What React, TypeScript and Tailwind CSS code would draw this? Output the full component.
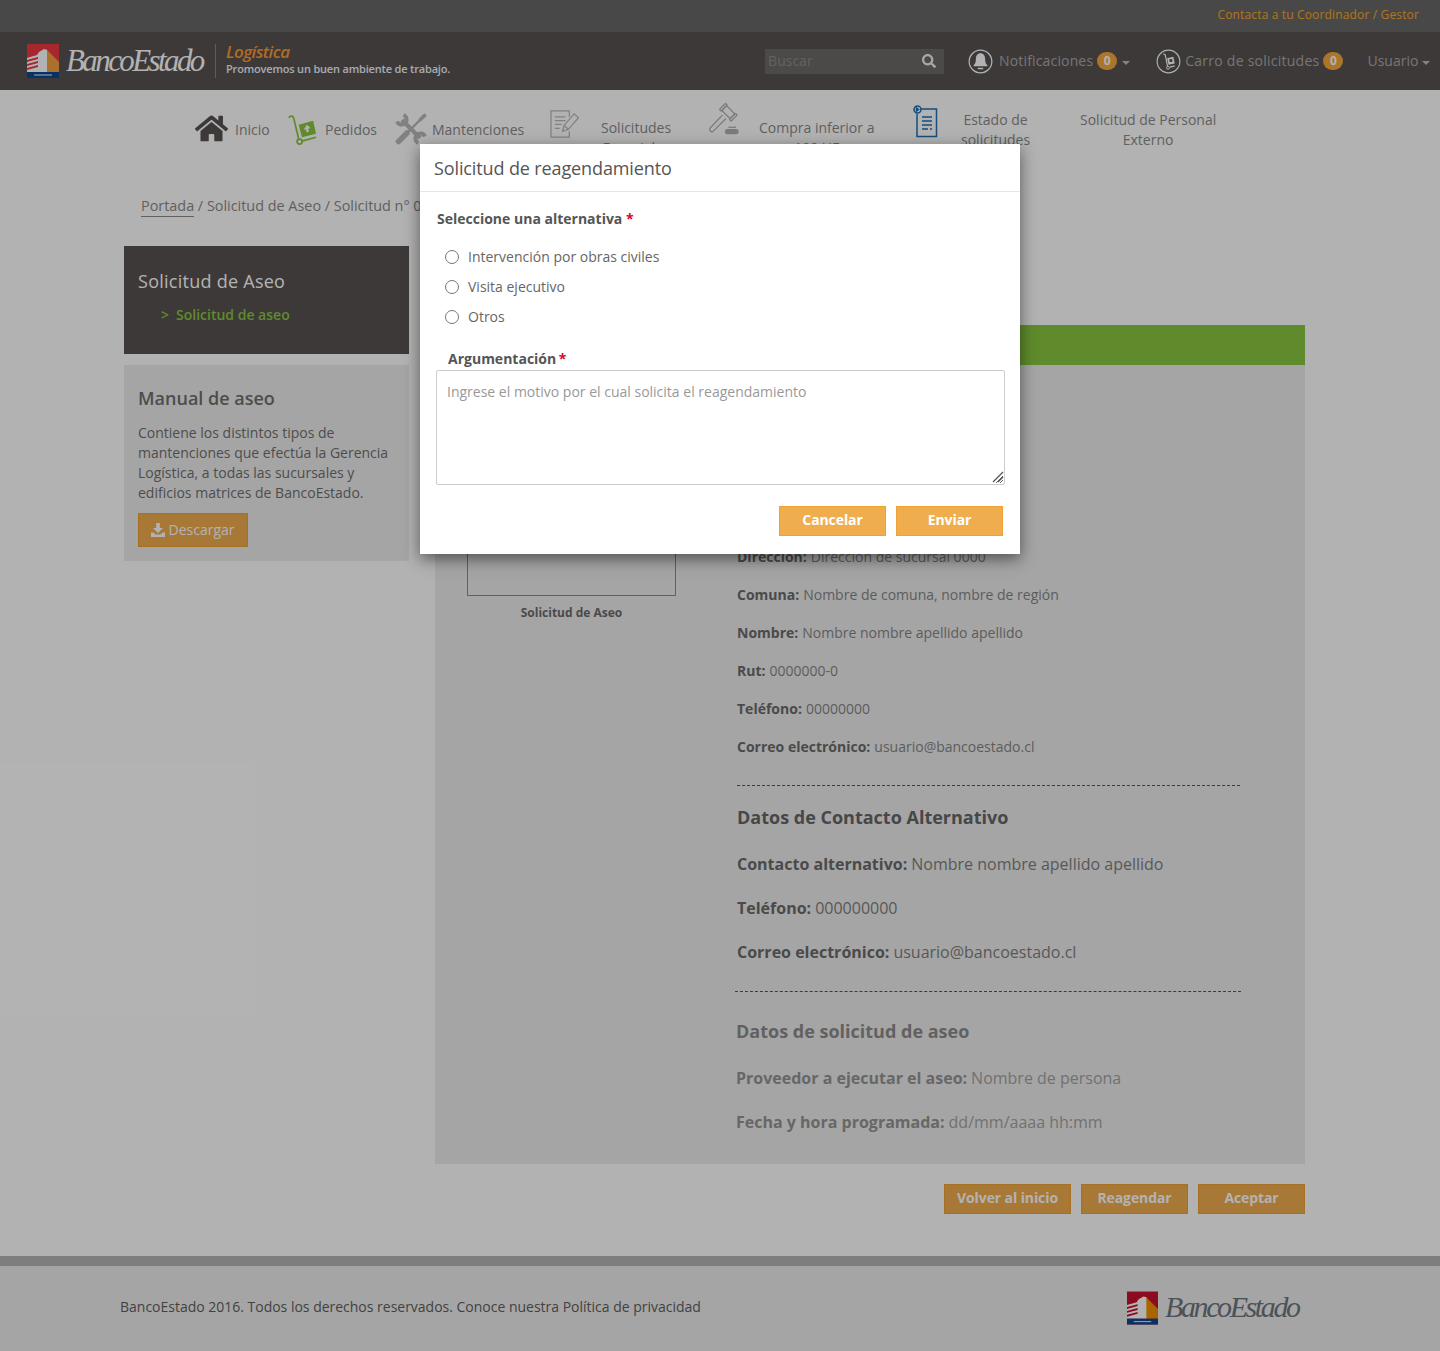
import React from "react";
import { FaHome, FaSearch } from "react-icons/fa";

function LogoMark({ className, red = "#c8102e", orange = "#f39200" }: { className?: string; red?: string; orange?: string }) {
  return (
    <svg viewBox="0 0 32 34" className={className}>
      <rect width="32" height="34" fill={red} />
      <path d="M19 5 L32 18 V28 H19 Z" fill={orange} />
      <path d="M0 14 L10 11 L12 8 L17 5 L20 6 V28 H0 Z" fill="#ffffff" />
      <path d="M0 16 L11 13 V15 L0 18 Z M0 20 L11 17 V19 L0 22 Z M0 24 L11 21 V23 L0 26 Z" fill={red} />
      <rect y="28" width="32" height="6" fill="#0a4a94" />
      <rect x="7" y="30.4" width="18" height="1.2" fill="#ffffff" opacity="0.8" />
    </svg>
  );
}

function BellCircle() {
  return (
    <svg viewBox="0 0 26 26" className="h-[25px] w-[25px]" fill="none">
      <circle cx="13" cy="13" r="11.8" stroke="#ffffff" strokeWidth="1.3" />
      <path d="M13 4.500c-3 0-4.800 2.400-4.800 5.800 0 3.700-1 5.200-2.400 6.500v1.200h14.400v-1.200c-1.400-1.300-2.400-2.800-2.400-6.500 0-3.400-1.800-5.800-4.800-5.800Z" fill="#ffffff" />
      <rect x="10" y="19.400" width="6" height="1.600" rx="0.800" fill="#ffffff" />
    </svg>
  );
}

function CartCircle() {
  return (
    <svg viewBox="0 0 26 26" className="h-[25px] w-[25px]" fill="none">
      <circle cx="13" cy="13" r="11.800" stroke="#ffffff" strokeWidth="1.200" />
      <path d="M7.500 5.500c1-.8 2 .1 2.200 1L12 18" stroke="#ffffff" strokeWidth="1.200" />
      <circle cx="12.500" cy="19.500" r="1.500" stroke="#ffffff" strokeWidth="1" />
      <path d="M14.500 18.800l5-1.300" stroke="#ffffff" strokeWidth="1.200" />
      <path d="M11.500 9.500l6.500-1.500 1.500 7-6.500 1.500Z" fill="#ffffff" />
      <rect x="14" y="10.500" width="3" height="3" fill="#575251" />
    </svg>
  );
}

function TruckIcon() {
  return (
    <svg viewBox="0 0 30 32" className="h-[32px] w-[29px]">
      <path d="M1 3.500C2 1 5 1 5.800 3.500L11 25" fill="none" stroke="#88c740" strokeWidth="1.800" />
      <circle cx="12" cy="28" r="2.600" fill="none" stroke="#88c740" strokeWidth="1.800" />
      <path d="M14.500 27.500L29 23.500" stroke="#88c740" strokeWidth="1.800" />
      <path d="M11 10.500L26 6.500 29 20 14.500 23.500Z" fill="#88c740" />
      <path d="M19.500 10.500l3.800 3.500-2.300.6.800 3.200-2.600.6-.8-3.200-2.300.6Z" fill="#ffffff" />
    </svg>
  );
}

function ToolsIcon() {
  return (
    <svg viewBox="0 0 32 32" className="h-[32px] w-[32px]" fill="none" stroke="#b9b9b9" strokeLinecap="round">
      {/* wrench: shaft and two open jaws */}
      <path d="M7 7L25 25" strokeWidth="4.500" strokeLinecap="butt" />
      <path d="M8.500 2A5 5 0 1 1 2 8.500" strokeWidth="3.800" strokeLinecap="butt" />
      <path d="M23.500 30A5 5 0 1 1 30 23.500" strokeWidth="3.800" strokeLinecap="butt" />
      {/* screwdriver */}
      <path d="M3.500 28.500L12 20" strokeWidth="5.500" />
      <path d="M12 20L25 7" strokeWidth="2.400" />
      <path d="M25.500 6.500L29.500 2.500" strokeWidth="3.800" />
    </svg>
  );
}

function FormIcon() {
  return (
    <svg viewBox="0 0 31 29" className="h-[28px] w-[30px]" fill="none" stroke="#b9b9b9" strokeWidth="1.300">
      <path d="M20 7V1H1v27h19v-6" />
      <path d="M5 7h11M5 11h11M5 15h7M5 19h5" />
      <path d="M13 22l1.500-6L25 4l4.500 4L19 20Z" />
      <path d="M14.500 16l4.500 4" />
    </svg>
  );
}

function GavelIcon() {
  return (
    <svg viewBox="0 0 32 32" className="h-[32px] w-[31px]" fill="none" stroke="#b0b0b0" strokeWidth="1.300">
      <g transform="translate(21 9) rotate(45)">
        <rect x="-6" y="-3.500" width="12" height="7" />
        <rect x="-8.500" y="-4.500" width="2.500" height="9" rx="1" />
        <rect x="6" y="-4.500" width="2.500" height="9" rx="1" />
      </g>
      <path d="M15 12L2 25.500C1 27.500 3 30 5 29L18.500 15.500" />
      <rect x="18" y="27" width="13" height="4" rx="2" fill="#b0b0b0" />
      <path d="M21 24.500h8" />
    </svg>
  );
}

function StatusIcon() {
  return (
    <svg viewBox="0 0 25 33" className="h-[33px] w-[25px]" fill="none" stroke="#1f6fb2" strokeWidth="1.500">
      <path d="M8 4h15.500v27.500H4V9" />
      <circle cx="4.500" cy="4.500" r="3.500" />
      <path d="M3.500 3v3l2-1.500Z" fill="#1f6fb2" />
      <path d="M9 12h10M9 16h10M9 20h10M9 24h6M17 24h2" />
    </svg>
  );
}

function DownloadIcon() {
  return (
    <svg viewBox="0 0 14 14" className="h-[14px] w-[14px]" fill="#ffffff">
      <path d="M5.200 0h3.600v5H12L7 10 2 5h3.200Z" />
      <path d="M0 9.500h2.500L4.500 11.500h5L11.500 9.500H14V14H0Z" />
    </svg>
  );
}

function Badge() {
  return (
    <span className="flex h-[18px] w-5 items-center justify-center rounded-full bg-[#f5a83f] text-xs font-bold text-white">
      0
    </span>
  );
}

function Caret() {
  return <span className="mt-[3px] h-0 w-0 border-x-[4px] border-t-[4px] border-x-transparent border-t-[#ffffff]/60" />;
}

function Row({ label, value }: { label: string; value: string }) {
  return (
    <div className="flex h-[38px] items-center text-sm text-[#858585]">
      <span className="mr-1 font-bold text-[#6b6b6b]">{label}</span>
      {value}
    </div>
  );
}

function BigRow({ label, value, muted }: { label: string; value: string; muted?: boolean }) {
  return (
    <div className={`flex h-[44px] items-center text-base ${muted ? "text-[#a3a3a3]" : "text-[#7f7f7f]"}`}>
      <span className={`mr-1 font-bold ${muted ? "text-[#949494]" : "text-[#6b6b6b]"}`}>{label}</span>
      {value}
    </div>
  );
}

function OrangeButton({ children, className }: { children: React.ReactNode; className?: string }) {
  return (
    <button className={`h-[30px] border border-[#eea236] bg-[#f0ad4e] pb-[2px] text-sm font-bold tracking-[-0.1px] text-white ${className}`}>
      {children}
    </button>
  );
}

function Modal() {
  return (
    <div className="absolute top-[144px] left-[420px] h-[410px] w-[600px] bg-white text-[#666] shadow-[0_5px_15px_rgba(0,0,0,0.5)]">
      <div className="flex h-[48px] items-center border-b border-[#e5e5e5] pl-[14px] text-lg tracking-[-0.12px] text-[#555]">
        Solicitud de reagendamiento
      </div>
      <div className="pt-[17px] pl-[17px] text-sm font-bold text-[#555]">
        Seleccione una alternativa <span className="text-[#e0002a]">*</span>
      </div>
      <div className="mt-[13px] pl-[25px]">
        {["Intervención por obras civiles", "Visita ejecutivo", "Otros"].map((item) => (
          <label key={item} className="flex h-[30px] items-center gap-[9px] text-sm">
            <span className="h-[14px] w-[14px] rounded-full border border-[#767676] bg-white" />
            {item}
          </label>
        ))}
      </div>
      <div className="mt-[17px] pl-[28px] text-sm font-bold text-[#555]">
        Argumentación <span className="-ml-[1px] text-[#e0002a]">*</span>
      </div>
      <div className="relative mt-[1px] pl-[16px]">
        <textarea
          placeholder="Ingrese el motivo por el cual solicita el reagendamiento"
          className="block h-[115px] w-[569px] rounded-[2px] border border-[#ccc] px-[10px] py-[11px] text-sm leading-[20px] placeholder:text-[#999]"
        />
        {/* darker resize grip */}
        <svg viewBox="0 0 12 12" className="pointer-events-none absolute right-[16px] bottom-[2px] h-3 w-3" stroke="#555" strokeWidth="1.300">
          <path d="M1 11L11 1M6 11L11 6" />
        </svg>
      </div>
      <div className="mt-[21px] flex justify-end gap-[10px] pr-[17px]">
        <OrangeButton className="w-[107px]">Cancelar</OrangeButton>
        <OrangeButton className="w-[107px]">Enviar</OrangeButton>
      </div>
    </div>
  );
}

export default function App() {
  return (
    <div className="relative h-[1351px] w-[1440px] overflow-hidden bg-white font-['Open_Sans',sans-serif] text-[#8a8a8a]">
      {/* Top strip */}
      <div className="flex h-8 items-center justify-end bg-[#686868] pr-[21px] pb-[2px] text-xs tracking-[0.15px] text-[#fca922]">
        Contacta a tu Coordinador / Gestor
      </div>

      {/* Header */}
      <header className="flex h-[58px] items-center bg-[#575251] pl-[27px]">
        <LogoMark className="h-[34px] w-[32px]" red="#ee3a42" orange="#f5a340" />
        <span className="ml-[7px] w-[149px] font-['Liberation_Serif',serif] text-[31px] tracking-[-2.600px] text-[#ffffff] italic">
          BancoEstado
        </span>
        <div className="h-[34px] border-l border-[#ffffff]/30" />
        <div className="-mt-[4px] ml-[10px]">
          <div className="text-[17px] leading-[20px] font-semibold tracking-[-0.55px] text-[#fb9a35] italic">Logística</div>
          <div className="text-[11px] leading-[14px] font-semibold tracking-[-0.18px] text-[#eef4ff]">Promovemos un buen ambiente de trabajo.</div>
        </div>
        <div className="ml-[315px] flex h-[25px] w-[179px] items-center justify-between bg-[#6e6a69] pr-[8px] pl-[3px] text-sm text-[#8f8c8b]">
          Buscar
          <FaSearch className="h-[14px] w-[14px] text-white/90" />
        </div>
        <div className="ml-6 flex items-center">
          <BellCircle />
          <span className="ml-[6px] text-sm tracking-[0.15px] text-[#ffffff]/50">Notificaciones</span>
          <span className="ml-1"><Badge /></span>
          <span className="ml-[5px] flex"><Caret /></span>
        </div>
        <div className="ml-[26px] flex items-center">
          <CartCircle />
          <span className="ml-[4px] text-sm tracking-[0.25px] text-[#ffffff]/50">Carro de solicitudes</span>
          <span className="ml-1"><Badge /></span>
        </div>
        <div className="ml-[24px] flex items-center text-sm text-[#ffffff]/50">
          Usuario
          <span className="ml-1 flex"><Caret /></span>
        </div>
      </header>

      {/* Menu */}
      <nav className="flex h-[100px] pt-[20px] pl-[195px] text-sm leading-[20px]">
        <div className="flex w-[94px] items-start">
          <FaHome className="mt-[2px] h-[33px] w-[33px] text-[#575251]" />
          <span className="mt-[10px] ml-[7px]">Inicio</span>
        </div>
        <div className="-ml-[1px] flex w-[106px] items-start">
          <div className="mt-[4px]"><TruckIcon /></div>
          <span className="mt-[10px] ml-[8px]">Pedidos</span>
        </div>
        <div className="flex w-[155px] items-start pl-[1px]">
          <div className="mt-[3px]"><ToolsIcon /></div>
          <span className="mt-[10px] ml-[5px]">Mantenciones</span>
        </div>
        <div className="flex w-[159px] items-start">
          <div className="ml-[1px]"><FormIcon /></div>
          <span className="mt-[8px] ml-[21px] text-center">Solicitudes<br />Especiales</span>
        </div>
        <div className="flex w-[205px] items-start">
          <div className="-mt-[7px]"><GavelIcon /></div>
          <span className="mt-[8px] ml-[20px] text-center">Compra inferior a<br />100 UF</span>
        </div>
        <div className="flex w-[167px] items-start">
          <div className="-mt-[5px]"><StatusIcon /></div>
          <span className="ml-[23px] text-center">Estado de<br />solicitudes</span>
        </div>
        <div className="text-center">Solicitud de Personal<br />Externo</div>
      </nav>

      {/* Breadcrumb */}
      <div className="h-[56px] pl-[141px] text-[14.4px] leading-[32px]">
        <span className="border-b border-[#8a8a8a] pb-[1px]">Portada</span> / Solicitud de Aseo / Solicitud n° 0000
      </div>

      {/* Body */}
      <div className="ml-[124px] flex items-start gap-[26px]">
        <aside className="w-[285px]">
          <div className="h-[108px] bg-[#575251] pt-[22px] pl-[14px] text-white">
            <div className="text-lg leading-[26px] tracking-[0.26px]">Solicitud de Aseo</div>
            <div className="mt-[11px] ml-[23px] text-sm leading-[20px] font-semibold text-[#88c740]">
              <span className="mr-[7px]">&gt;</span>Solicitud de aseo
            </div>
          </div>
          <div className="mt-[11px] h-[196px] bg-[#ededed] px-[14px] pt-[20px] text-[#6f6f6f]">
            <h3 className="text-lg leading-[26px] font-semibold">Manual de aseo</h3>
            <p className="mt-[12px] text-sm leading-[20px]">
              Contiene los distintos tipos de mantenciones que efectúa la Gerencia Logística, a todas las sucursales y edificios matrices de BancoEstado.
            </p>
            <button className="mt-[10px] flex h-[34px] w-[110px] items-center justify-center gap-[3px] border border-[#eea236] bg-[#f0ad4e] text-sm text-white">
              <DownloadIcon />
              Descargar
            </button>
          </div>
        </aside>

        <main className="w-[870px] pt-[79px]">
          <div className="h-10 bg-[#88c740]" />
          <div className="flex h-[799px] bg-[#ededed]">
            <div className="ml-8 w-[209px] pt-[35px]">
              <div className="h-[196px] border border-[#8c8c8c]" />
              <div className="mt-[8px] text-center text-xs leading-[18px] font-bold text-[#6b6b6b]">Solicitud de Aseo</div>
            </div>
            <div className="ml-[61px] w-[504px] pt-[173px]">
              <Row label="Dirección:" value="Dirección de sucursal 0000" />
              <Row label="Comuna:" value="Nombre de comuna, nombre de región" />
              <Row label="Nombre:" value="Nombre nombre apellido apellido" />
              <Row label="Rut:" value="0000000-0" />
              <Row label="Teléfono:" value="00000000" />
              <Row label="Correo electrónico:" value="usuario@bancoestado.cl" />
              <div className="mt-[19px] mr-[1px] border-t border-dashed border-[#555]" />
              <h3 className="mt-[18px] text-lg leading-[26px] font-bold text-[#666]">Datos de Contacto Alternativo</h3>
              <div className="mt-3">
                <BigRow label="Contacto alternativo:" value="Nombre nombre apellido apellido" />
                <BigRow label="Teléfono:" value="000000000" />
                <BigRow label="Correo electrónico:" value="usuario@bancoestado.cl" />
              </div>
              <div className="mt-[17px] -ml-[2px] border-t border-dashed border-[#555]" />
              <div className="-ml-[1px]">
                <h3 className="mt-[26px] text-lg leading-[26px] font-bold text-[#8c8c8c]">Datos de solicitud de aseo</h3>
                <div className="mt-3">
                  <BigRow muted label="Proveedor a ejecutar el aseo:" value="Nombre de persona" />
                  <BigRow muted label="Fecha y hora programada:" value="dd/mm/aaaa hh:mm" />
                </div>
              </div>
            </div>
          </div>
          <div className="mt-5 flex justify-end gap-[10px]">
            <OrangeButton className="w-[127px]">Volver al inicio</OrangeButton>
            <OrangeButton className="w-[107px]">Reagendar</OrangeButton>
            <OrangeButton className="w-[107px]">Aceptar</OrangeButton>
          </div>
        </main>
      </div>

      {/* Footer */}
      <footer className="mt-[42px] border-t-[10px] border-[#b8b3b3] bg-[#ededed]">
        <div className="flex h-[85px] items-center justify-between pr-[141px] pb-[2px] pl-[120px] text-sm text-[#5e5e5e]">
          <span className="-mt-[2px] tracking-[-0.01px]">BancoEstado 2016. Todos los derechos reservados. Conoce nuestra Política de privacidad</span>
          <div className="flex items-center">
            <LogoMark className="h-[34px] w-[31px]" />
            <span className="ml-[7px] w-[134px] font-['Liberation_Serif',serif] text-[30px] tracking-[-2.400px] text-[#6f767c] italic">
              BancoEstado
            </span>
          </div>
        </div>
      </footer>

      {/* Backdrop */}
      <div className="absolute inset-0 bg-black/30" />
      <Modal />
    </div>
  );
}
